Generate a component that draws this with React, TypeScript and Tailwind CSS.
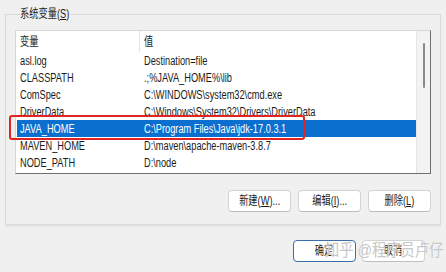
import React from "react";

const rows = [
  { name: "asl.log", value: "Destination=file" },
  { name: "CLASSPATH", value: ".;%JAVA_HOME%\\lib" },
  { name: "ComSpec", value: "C:\\WINDOWS\\system32\\cmd.exe" },
  { name: "DriverData", value: "C:\\Windows\\System32\\Drivers\\DriverData" },
  { name: "JAVA_HOME", value: "C:\\Program Files\\Java\\jdk-17.0.3.1", selected: true },
  { name: "MAVEN_HOME", value: "D:\\maven\\apache-maven-3.8.7" },
  { name: "NODE_PATH", value: "D:\\node" },
];

// the screenshot is squeezed horizontally, so text is narrowed the same way
const T = ({ children, center }: { children: React.ReactNode; center?: boolean }) => (
  <span
    className={
      "inline-block whitespace-nowrap scale-x-[0.77] " +
      (center ? "origin-center" : "origin-left")
    }
  >
    {children}
  </span>
);

const Btn = ({ children, primary }: { children: React.ReactNode; primary?: boolean }) => (
  <button
    className={
      "flex h-[22px] w-[63px] items-center justify-center rounded-[4px] bg-white " +
      (primary
        ? "border border-[#3c6ea8]"
        : "border border-[#d3d3d3] border-b-[#bdbdbd]")
    }
  >
    <T center>{children}</T>
  </button>
);

const App = () => {
  return (
    <div className="relative h-[272px] w-[446px] overflow-hidden bg-[#f0f0f0] font-['Liberation_Sans','Noto_Sans_CJK_SC',sans-serif] text-[12px] text-[#1b1b1b]">
      <fieldset className="mx-[5px] mt-[6px] min-w-0 border border-[#d9d9d9] px-[9px] pb-[12px] pt-[8px] shadow-[0_2px_0_#e6e6e6]">
        <legend className="ml-[5px] w-[51px] leading-[16px]">
          <T>
            系统变量(<span className="underline">S</span>)
          </T>
        </legend>

        {/* variable list */}
        <div className="flex h-[144px] border border-b-[#707070] border-l-[#d6d6d6] border-r-[#707070] border-t-[#d6d6d6] bg-white">
          <div className="flex-1 overflow-hidden">
            <div className="flex h-[21px] items-center">
              <div className="w-[123px] pl-[4px]">
                <T>变量</T>
              </div>
              <div className="w-px self-stretch bg-[#e3e3e3]" />
              <div className="pl-[4px]">
                <T>值</T>
              </div>
            </div>
            {rows.map((r) => (
              <div
                key={r.name}
                className={
                  "flex h-[17px] items-center " +
                  (r.selected ? "ml-px bg-[#0b6fcf] text-white" : "")
                }
              >
                <div className={r.selected ? "w-[123px] pl-[3px]" : "w-[124px] pl-[4px]"}>
                  <T>{r.name}</T>
                </div>
                <div className="pl-[4px]">
                  <T>{r.value}</T>
                </div>
              </div>
            ))}
          </div>
          <div className="w-[14px] border-l border-[#e6e6e6] bg-[#f3f3f3]">
            <div className="mx-auto mt-[12px] h-[45px] w-[2px] rounded bg-[#8a8a8a]" />
          </div>
        </div>

        <div className="mt-[16px] flex justify-end gap-[7px]">
          <Btn>
            新建(<span className="underline">W</span>)...
          </Btn>
          <Btn>
            编辑(<span className="underline">I</span>)...
          </Btn>
          <Btn>
            删除(<span className="underline">L</span>)
          </Btn>
        </div>
      </fieldset>

      <div className="mt-[15px] flex justify-end gap-[6px] pr-[21px]">
        <Btn primary>确定</Btn>
        <Btn>取消</Btn>
      </div>

      {/* highlight drawn around the JAVA_HOME row */}
      <div className="absolute left-[9px] top-[115px] h-[25px] w-[296px] rounded-[3px] border-[2.5px] border-[#e02424]" />

      {/* watermark */}
      <div className="absolute left-[325px] top-[240px] whitespace-nowrap text-[17px] leading-[22px] text-[#c6c6c6] [text-shadow:0_0_1px_#ffffff]">
        <span className="inline-block origin-left scale-x-[0.84]">知乎 @程序员卢仔</span>
      </div>
    </div>
  );
};

export default App;
